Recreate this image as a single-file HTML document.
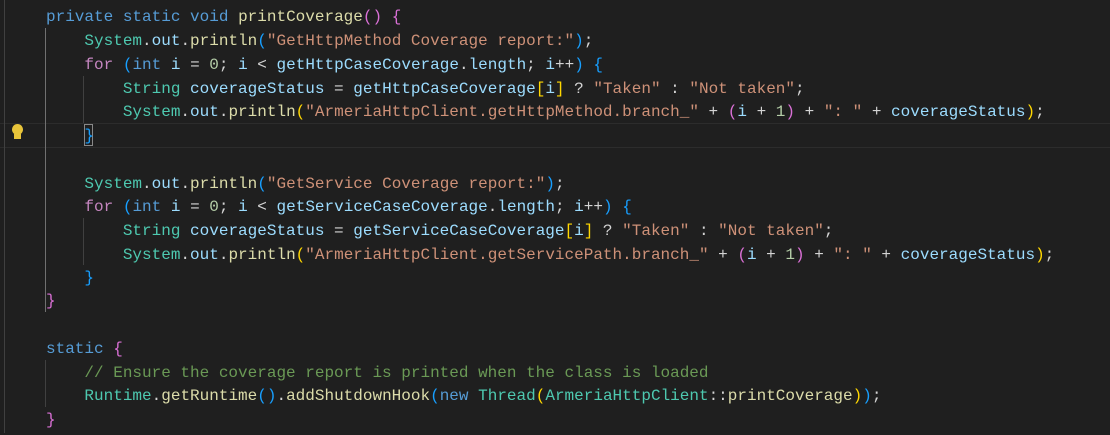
<!DOCTYPE html>
<html><head><meta charset="utf-8"><style>
html,body{margin:0;padding:0;background:#1f1f1f;width:1110px;height:433px;overflow:hidden}
.ed{position:absolute;left:0;top:0;width:1110px;height:433px;font-family:"Liberation Mono",monospace;font-size:16px;color:#d4d4d4}
.tx{position:absolute;left:0;top:2px;width:1110px;height:433px}
.l{position:absolute;left:46px;height:23.7px;line-height:23.7px;white-space:pre}
.k{color:#569cd6}.c{color:#c586c0}.t{color:#4ec9b0}.v{color:#9cdcfe}.f{color:#dcdcaa}.s{color:#ce9178}.n{color:#b5cea8}.g{color:#6a9955}
.b1{color:#ffd700}.b2{color:#da70d6}.b3{color:#179fff}
.gd{position:absolute;width:1px;background:#404040}
</style></head><body><div class="ed">
<div style="position:absolute;left:0;top:123px;width:1110px;height:23px;border-top:1px solid #2c2c2c;border-bottom:1px solid #2c2c2c"></div>
<div class="gd" style="left:4px;top:0;height:433px"></div>
<div class="gd" style="left:45px;top:28px;height:284px;background:#707070"></div>
<div class="gd" style="left:83px;top:76px;height:47px"></div>
<div class="gd" style="left:83px;top:218px;height:47px"></div>
<div class="gd" style="left:45px;top:360px;height:47px"></div>
<div style="position:absolute;left:12px;top:124px;width:11px;height:11px;border-radius:50%;background:#e8c43a"></div>
<div style="position:absolute;left:14px;top:134px;width:7px;height:5px;background:#e8c43a"></div>
<div style="position:absolute;left:84px;top:124px;width:9px;height:22px;border:1px solid #888;box-sizing:border-box"></div>
<div class="tx">
<div class="l" style="top:4px"><span class="k">private</span> <span class="k">static</span> <span class="k">void</span> <span class="f">printCoverage</span><span class="b2">()</span> <span class="b2">{</span></div>
<div class="l" style="top:28px">    <span class="t">System</span>.<span class="v">out</span>.<span class="f">println</span><span class="b3">(</span><span class="s">"GetHttpMethod Coverage report:"</span><span class="b3">)</span>;</div>
<div class="l" style="top:52px">    <span class="c">for</span> <span class="b3">(</span><span class="k">int</span> <span class="v">i</span> = <span class="n">0</span>; <span class="v">i</span> &lt; <span class="v">getHttpCaseCoverage</span>.<span class="v">length</span>; <span class="v">i</span>++<span class="b3">)</span> <span class="b3">{</span></div>
<div class="l" style="top:76px">        <span class="t">String</span> <span class="v">coverageStatus</span> = <span class="v">getHttpCaseCoverage</span><span class="b1">[</span><span class="v">i</span><span class="b1">]</span> ? <span class="s">"Taken"</span> : <span class="s">"Not taken"</span>;</div>
<div class="l" style="top:99px">        <span class="t">System</span>.<span class="v">out</span>.<span class="f">println</span><span class="b1">(</span><span class="s">"ArmeriaHttpClient.getHttpMethod.branch_"</span> + <span class="b2">(</span><span class="v">i</span> + <span class="n">1</span><span class="b2">)</span> + <span class="s">": "</span> + <span class="v">coverageStatus</span><span class="b1">)</span>;</div>
<div class="l" style="top:123px">    <span class="b3">}</span></div>
<div class="l" style="top:171px">    <span class="t">System</span>.<span class="v">out</span>.<span class="f">println</span><span class="b3">(</span><span class="s">"GetService Coverage report:"</span><span class="b3">)</span>;</div>
<div class="l" style="top:194px">    <span class="c">for</span> <span class="b3">(</span><span class="k">int</span> <span class="v">i</span> = <span class="n">0</span>; <span class="v">i</span> &lt; <span class="v">getServiceCaseCoverage</span>.<span class="v">length</span>; <span class="v">i</span>++<span class="b3">)</span> <span class="b3">{</span></div>
<div class="l" style="top:218px">        <span class="t">String</span> <span class="v">coverageStatus</span> = <span class="v">getServiceCaseCoverage</span><span class="b1">[</span><span class="v">i</span><span class="b1">]</span> ? <span class="s">"Taken"</span> : <span class="s">"Not taken"</span>;</div>
<div class="l" style="top:242px">        <span class="t">System</span>.<span class="v">out</span>.<span class="f">println</span><span class="b1">(</span><span class="s">"ArmeriaHttpClient.getServicePath.branch_"</span> + <span class="b2">(</span><span class="v">i</span> + <span class="n">1</span><span class="b2">)</span> + <span class="s">": "</span> + <span class="v">coverageStatus</span><span class="b1">)</span>;</div>
<div class="l" style="top:265px">    <span class="b3">}</span></div>
<div class="l" style="top:288px"><span class="b2">}</span></div>
<div class="l" style="top:336px"><span class="k">static</span> <span class="b2">{</span></div>
<div class="l" style="top:360px">    <span class="g">// Ensure the coverage report is printed when the class is loaded</span></div>
<div class="l" style="top:383px">    <span class="t">Runtime</span>.<span class="f">getRuntime</span><span class="b3">()</span>.<span class="f">addShutdownHook</span><span class="b3">(</span><span class="k">new</span> <span class="t">Thread</span><span class="b1">(</span><span class="t">ArmeriaHttpClient</span>::<span class="f">printCoverage</span><span class="b1">)</span><span class="b3">)</span>;</div>
<div class="l" style="top:407px"><span class="b2">}</span></div>
</div>
</div></body></html>
